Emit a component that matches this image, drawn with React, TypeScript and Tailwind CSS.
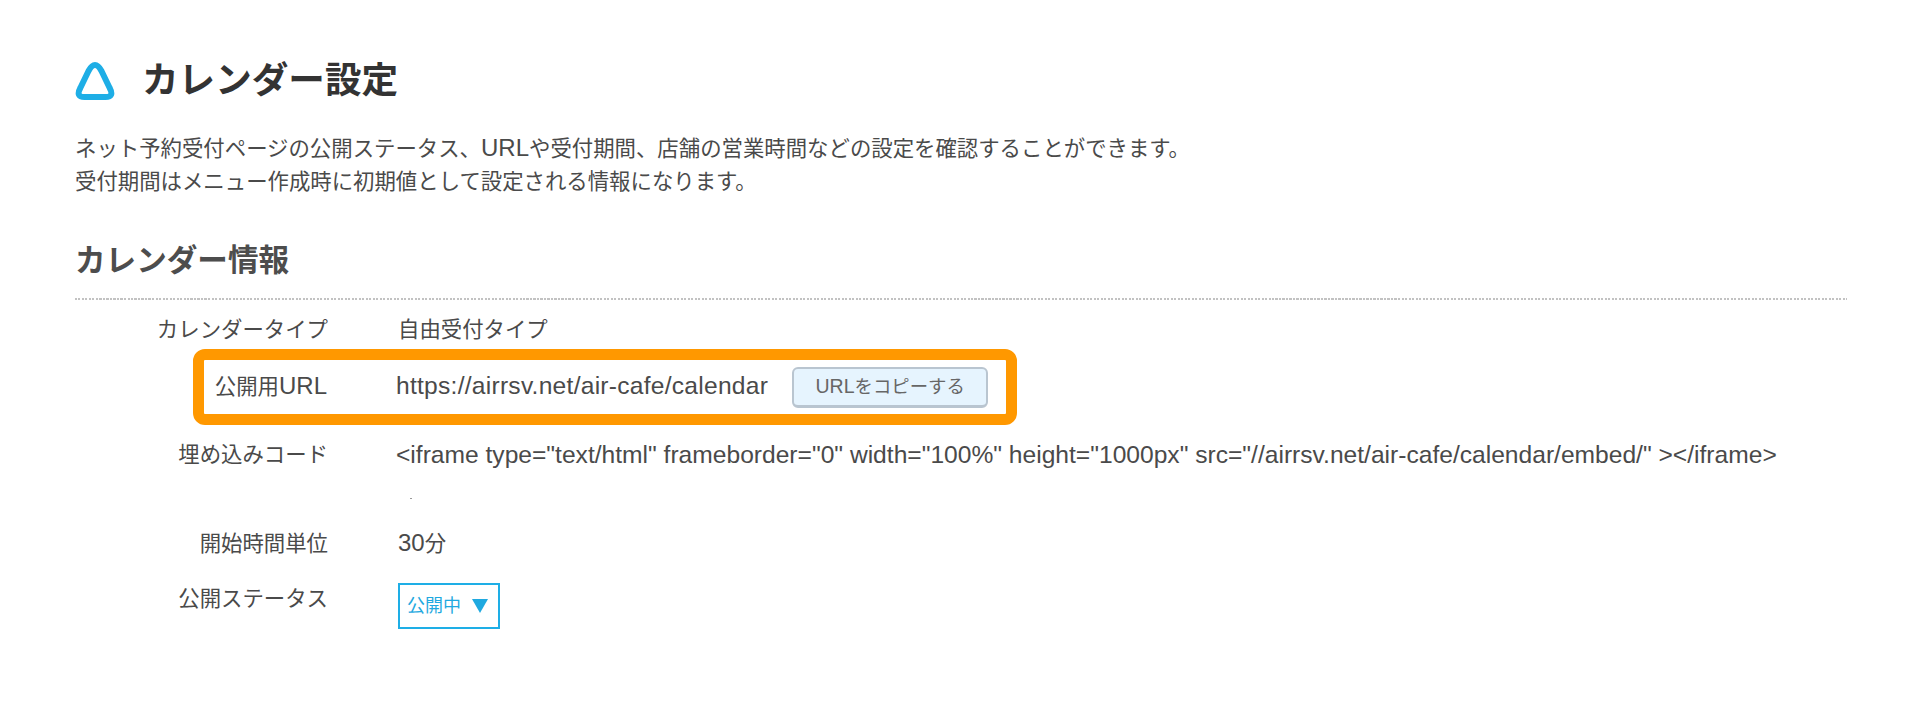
export default function App() {
  const font = "[font-family:'Liberation_Sans','Noto_Sans_CJK_JP',sans-serif]";
  return (
    <div className={`${font} h-[721px] w-[1920px] overflow-hidden bg-white pt-[61px] pl-[75px] pr-[73px] text-[#4a4a4a]`}>
      <div className="flex h-[40px] items-center">
        <svg width="40" height="38" viewBox="0 0 40 38" fill="none" className="shrink-0">
          <path
            d="M13.5 9 Q20 -3 26.5 9 L34.7 26 Q39.5 35 30.5 35 L9.5 35 Q0.5 35 5.3 26 Z"
            stroke="#1eaee6"
            strokeWidth="6"
            strokeLinejoin="round"
          />
        </svg>
        <h1 className="ml-[27px] text-[36.6px] leading-[40px] font-bold text-[#333]">カレンダー設定</h1>
      </div>
      <p className="mt-[32px] text-[21.4px] leading-[33px] text-[#4a4a4a]">
        ネット予約受付ページの公開ステータス、<span className="text-[24px] leading-none">URL</span>や受付期間、店舗の営業時間などの設定を確認することができます。
        <br />
        受付期間はメニュー作成時に初期値として設定される情報になります。
      </p>
      <h2 className="mt-[41px] h-[58px] text-[30.6px] leading-[40px] font-bold text-[#4d4d4d]">カレンダー情報</h2>
      <div className="h-[2px] bg-[repeating-linear-gradient(90deg,#c2c2c2_0,#c2c2c2_2px,transparent_2px,transparent_3.5px)]" />

      <div className="flex h-[49px] pt-[15px] text-[21.4px] leading-[30px]">
        <div className="w-[253px] text-right">カレンダータイプ</div>
        <div className="ml-[70px]">自由受付タイプ</div>
      </div>

      <div className="ml-[118px] flex h-[76px] w-[824px] items-center rounded-[12px] border-[11px] border-[#ff9800] text-[21.4px] leading-[30px]">
        <div className="mb-[1px] w-[123px] text-right">
          公開用<span className="text-[24px] leading-none">URL</span>
        </div>
        <div className="mb-[2px] ml-[69px] text-[24.6px] tracking-[0.25px]">https://airrsv.net/air-cafe/calendar</div>
        <button className="ml-[24px] flex h-[41px] w-[196px] items-center justify-center rounded-[6px] border-2 border-b-[3px] border-[#b9c5d0] bg-[#e6f4fe] text-[18.4px] text-[#666]">
          <span className="text-[19.5px] leading-none">URL</span>をコピーする
        </button>
      </div>

      <div className="flex h-[104px] pt-[15px] text-[21.4px] leading-[30px]">
        <div className="w-[253px] text-right">埋め込みコード</div>
        <div className="ml-[68px] flex flex-col">
          <div className="text-[24.6px] whitespace-nowrap">{`<iframe type="text/html" frameborder="0" width="100%" height="1000px" src="//airrsv.net/air-cafe/calendar/embed/" ></iframe>`}</div>
          <div className="mt-[28px] ml-[14px] h-[1px] w-[2px] bg-[#999]" />
        </div>
      </div>

      <div className="flex h-[30px] text-[21.4px] leading-[30px]">
        <div className="w-[253px] text-right">開始時間単位</div>
        <div className="ml-[70px]">
          <span className="text-[24px] leading-none">30</span>分
        </div>
      </div>

      <div className="mt-[23px] flex text-[21.4px] leading-[30px]">
        <div className="w-[253px] pt-[2px] text-right">公開ステータス</div>
        <div className="mt-[1px] ml-[70px] flex h-[46px] w-[102px] items-center border-2 border-[#1eaee6] pl-[7px] text-[18px] text-[#1fa9e0]">
          公開中
          <svg width="16" height="14" viewBox="0 0 16 14" className="ml-[11px]">
            <path d="M0 0 H16 L8 14 Z" fill="#1fa9e0" />
          </svg>
        </div>
      </div>
    </div>
  );
}
